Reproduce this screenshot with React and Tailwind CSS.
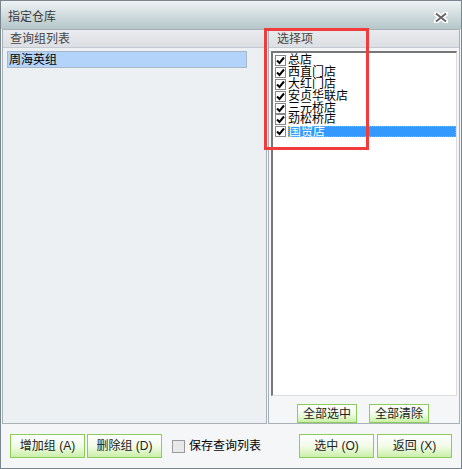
import React from 'react'

const stores = ['总店', '西直门店', '大红门店', '安贞华联店', '三元桥店', '劲松桥店', '国贸店']

const font = { fontFamily: '"Liberation Sans", "Noto Sans CJK SC", sans-serif' }

const GreenButton = ({ children, className }) => (
  <button
    type='button'
    className={`flex items-center justify-center border border-[#8ccd5a] bg-gradient-to-b from-[#ffffff] via-[#f2fbe8] to-[#c9f0a6] text-[12px] text-[#222] ${className}`}
  >
    {children}
  </button>
)

const Check = () => (
  <span className='flex h-[11px] w-[11px] shrink-0 items-center justify-center border border-[#888] bg-white'>
    <svg width='9' height='9' viewBox='0 0 9 9'>
      <path d='M1 4.5 L3.5 7 L8 1.5' stroke='#000' strokeWidth='2' fill='none' />
    </svg>
  </span>
)

const App = () => {
  return (
    <div style={font} className='relative flex h-[469px] w-[462px] flex-col border border-[#7a868e] bg-[#f4f6f8]'>
      {/* title bar */}
      <div className='flex h-[28px] shrink-0 items-center justify-between bg-gradient-to-b from-[#eef3f4] to-[#b5c6ca] px-[7px] pt-[4px]'>
        <span className='text-[12px] text-[#3a3a3a]'>指定仓库</span>
        <svg width='14' height='11' viewBox='0 0 14 11' className='mr-[6px]'>
          <path d='M2 1.5 L12 9.5 M12 1.5 L2 9.5' stroke='#fff' strokeWidth='5' strokeLinecap='round' />
          <path d='M2 1.5 L12 9.5 M12 1.5 L2 9.5' stroke='#666' strokeWidth='2' />
        </svg>
      </div>

      {/* panels */}
      <div className='flex h-[395px] shrink-0 gap-[1px] px-[1px]'>
        {/* left */}
        <div className='flex w-[265px] flex-col border border-[#a8b1b8] bg-[#edf0f3]'>
          <div className='flex h-[18px] items-center border-b border-[#c4cacf] bg-gradient-to-b from-[#e9ebee] to-[#dcdfe3] px-[7px] text-[12px] text-[#444]'>
            查询组列表
          </div>
          <div className='px-[4px] pt-[3px]'>
            <div className='flex h-[17px] w-[240px] items-center border border-[#a8b8c8] bg-[#b3d3fb] px-[1px] text-[12px] text-black'>
              周海英组
            </div>
          </div>
        </div>

        {/* right */}
        <div className='flex flex-1 flex-col border border-[#a8b1b8] bg-[#f4f6f8]'>
          <div className='flex h-[18px] items-center border-b border-[#c4cacf] bg-gradient-to-b from-[#e9ebee] to-[#dcdfe3] px-[8px] text-[12px] text-[#444]'>
            选择项
          </div>
          <div className='ml-[2px] mr-[2px] mt-[3px] h-[345px] border-l-2 border-t-2 border-r border-b border-l-[#777] border-t-[#777] border-r-[#ddd] border-b-[#ddd] bg-white pl-[2px] pt-[2px]'>
            {stores.map((s, i) => (
              <div key={s} className='flex h-[11.8px] items-center gap-[2px]'>
                <Check />
                <span
                  className={`text-[12px] leading-[11px] ${
                    i === stores.length - 1
                      ? 'h-[11px] flex-1 border border-dotted border-[#f0a030] bg-[#3399ff] text-white'
                      : 'text-black'
                  }`}
                >
                  {s}
                </span>
              </div>
            ))}
          </div>
          <div className='flex justify-center gap-[12px] pr-[2px] pt-[8px]'>
            <GreenButton className='h-[19px] w-[60px]'>全部选中</GreenButton>
            <GreenButton className='h-[19px] w-[60px]'>全部清除</GreenButton>
          </div>
        </div>
      </div>

      {/* bottom buttons */}
      <div className='flex items-center px-[9px] pt-[10px]'>
        <GreenButton className='h-[24px] w-[75px]'>增加组 (A)</GreenButton>
        <GreenButton className='ml-[2px] h-[24px] w-[75px]'>删除组 (D)</GreenButton>
        <span className='ml-[10px] h-[13px] w-[13px] border border-[#999] bg-[#e8e8e8]' />
        <span className='ml-[4px] text-[12px] text-black'>保存查询列表</span>
        <GreenButton className='ml-auto h-[24px] w-[75px]'>选中 (O)</GreenButton>
        <GreenButton className='ml-[3px] h-[24px] w-[75px]'>返回 (X)</GreenButton>
      </div>

      {/* red highlight */}
      <div className='absolute left-[263px] top-[27px] h-[122px] w-[105px] border-[3px] border-[#f03c3c]' />
    </div>
  )
}

export default App
